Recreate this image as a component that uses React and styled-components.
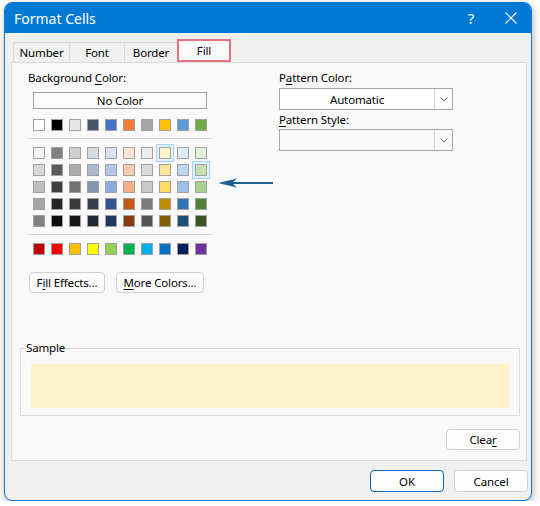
import React from 'react'
import styled, { createGlobalStyle } from 'styled-components'

const GlobalStyle = createGlobalStyle`
    body {
        margin: 0;
        background: #fff;
        font-family: "Noto Sans", "Segoe UI", sans-serif;
    }
`

const Window = styled.div`
    box-sizing: border-box;
    width: 528px;
    height: 499px;
    margin: 2px 0 0 4px;
    border: 1px solid #0a78d6;
    border-radius: 8px;
    overflow: hidden;
    background: #f0f0f0;
    box-shadow: 1px 3px 8px rgba(0, 0, 0, 0.3);
    display: flex;
    flex-direction: column;
    font-size: 11.5px;
    letter-spacing: -0.15px;
    color: #000;
`
const TitleBar = styled.div`
    height: 30px;
    background: #0078d4;
    color: #fff;
    display: flex;
    align-items: center;
    padding-left: 9px;
    letter-spacing: 0;
`
const Title = styled.span`
    flex: 1;
    font-size: 14px;
`
const TitleButton = styled.div`
    width: 40px;
    height: 30px;
    display: flex;
    align-items: center;
    justify-content: center;
    font-size: 15px;
`
const TabStrip = styled.div`
    display: flex;
    align-items: flex-end;
    height: 23px;
    margin: 6px 0 0 8px;
    position: relative;
    z-index: 1;
`
const Tab = styled.div`
    box-sizing: border-box;
    width: ${p => p.w}px;
    height: ${p => (p.active ? 23 : 20)}px;
    margin-left: ${p => (p.first ? 0 : -1)}px;
    border: ${p => (p.active ? '2px solid #e5707e' : '1px solid #d9d9d9')};
    border-bottom: ${p => (p.active ? '2px solid #e5707e' : 'none')};
    background: ${p => (p.active ? '#fafafa' : '#f0f0f0')};
    display: flex;
    align-items: center;
    justify-content: center;
`
const Panel = styled.div`
    box-sizing: border-box;
    position: relative;
    height: 399px;
    margin: 0 4px 0 6px;
    border: 1px solid #dadada;
    background: #f9f9f9;
    padding: 8px 6px 0 8px;
`
const TopSection = styled.div`
    display: grid;
    grid-template-columns: 251px 1fr;
    padding-left: 8px;
`
const Column = styled.div`
    display: flex;
    flex-direction: column;
    align-items: flex-start;
`
const Label = styled.div`
    line-height: 14px;
    height: 14px;
    margin-top: ${p => p.mt || 0}px;
`
const Key = styled.span`
    text-decoration: underline;
    text-underline-offset: 2px;
`
const NoColor = styled.div`
    box-sizing: border-box;
    width: 174px;
    height: 17px;
    margin: 7px 0 0 5px;
    border: 1px solid #a0a0a0;
    background: #fbfbfb;
    text-align: center;
    line-height: 15px;
`
const SwatchGrid = styled.div`
    display: grid;
    grid-template-columns: repeat(10, 12px);
    column-gap: 6px;
    row-gap: 5px;
    margin: ${p => p.mt}px 0 0 5px;
`
const Swatch = styled.div`
    box-sizing: border-box;
    width: 12px;
    height: 12px;
    border: 1px solid #a0a0a0;
    background: ${p => p.color};
    ${p => p.hot && `
        box-shadow: 0 0 0 2px #e4f2ff;
        outline: 1px solid #9fd3ff;
        outline-offset: 2px;
    `}
`
const Separator = styled.div`
    width: 184px;
    height: 1px;
    background: #cfcfcf;
    margin-top: 7px;
`
const ButtonRow = styled.div`
    display: flex;
    gap: 11px;
    margin: 17px 0 0 1px;
`
const PushButton = styled.div`
    box-sizing: border-box;
    width: ${p => p.w}px;
    height: ${p => p.h || 21}px;
    border: 1px solid ${p => (p.primary ? '#0067c0' : '#d0d0d0')};
    border-radius: 4px;
    background: #fdfdfd;
    display: flex;
    align-items: center;
    justify-content: center;
`
const Dropdown = styled.div`
    box-sizing: border-box;
    width: 174px;
    height: 22px;
    margin-top: ${p => p.mt}px;
    border: 1px solid #a6a6a6;
    background: ${p => (p.disabled ? '#f9f9f9' : '#fff')};
    display: flex;
`
const DropValue = styled.div`
    flex: 1;
    display: flex;
    align-items: center;
    justify-content: center;
`
const DropArrow = styled.div`
    width: 17px;
    border-left: 1px solid #d4d4d4;
    display: flex;
    align-items: center;
    justify-content: center;
`
const Group = styled.fieldset`
    box-sizing: border-box;
    width: 500px;
    margin: 48px 0 0 0;
    padding: 0 10px 7px;
    border: 1px solid #dcdcdc;
`
const Legend = styled.legend`
    padding: 0;
    margin-left: -5px;
    line-height: 14px;
`
const SampleFill = styled.div`
    height: 44px;
    margin-top: 9px;
    background: #fff2cc;
`
const ClearRow = styled.div`
    display: flex;
    justify-content: flex-end;
    width: 500px;
    margin-top: 13px;
`
const Pointer = styled.svg`
    position: absolute;
    left: 206px;
    top: 115px;
`
const Footer = styled.div`
    display: flex;
    justify-content: flex-end;
    gap: 10px;
    padding: 9px 3px 0 0;
`

const topRow = ['#ffffff', '#000000', '#e7e6e6', '#44546a', '#4472c4', '#ed7d31', '#a5a5a5', '#ffc000', '#5b9bd5', '#70ad47']
const shades = [
    '#f2f2f2', '#7f7f7f', '#d0cece', '#d6dce4', '#d9e1f2', '#fce4d6', '#ededed', '#fff2cc', '#ddebf7', '#e2efda',
    '#d9d9d9', '#595959', '#aeaaaa', '#acb9ca', '#b4c6e7', '#f8cbad', '#dbdbdb', '#ffe699', '#bdd7ee', '#c6e0b4',
    '#bfbfbf', '#404040', '#757171', '#8497b0', '#8ea9db', '#f4b084', '#c9c9c9', '#ffd966', '#9bc2e6', '#a9d08e',
    '#a6a6a6', '#262626', '#3a3838', '#333f4f', '#305496', '#c65911', '#7b7b7b', '#bf8f00', '#2f75b5', '#548235',
    '#808080', '#0d0d0d', '#161616', '#222b35', '#203764', '#833c0c', '#525252', '#806000', '#1f4e78', '#375623',
]
const standard = ['#c00000', '#ff0000', '#ffc000', '#ffff00', '#92d050', '#00b050', '#00b0f0', '#0070c0', '#002060', '#7030a0']
const hot = [7, 19]

const tabs = [
    { name: 'Number', w: 57 },
    { name: 'Font', w: 56 },
    { name: 'Border', w: 54 },
    { name: 'Fill', w: 54, active: true },
]

function Chevron() {
    return (
        <svg width="8" height="5" viewBox="0 0 8 5">
            <path d="M0.5 0.5 L4 4 L7.5 0.5" fill="none" stroke="#606060" strokeWidth="1" />
        </svg>
    )
}

export default function App() {
    return (
        <Window>
            <GlobalStyle />
            <TitleBar>
                <Title>Format Cells</Title>
                <TitleButton>?</TitleButton>
                <TitleButton>
                    <svg width="12" height="12" viewBox="0 0 12 12">
                        <path d="M0.5 0.5 L11.5 11.5 M11.5 0.5 L0.5 11.5" stroke="#fff" strokeWidth="1.1" />
                    </svg>
                </TitleButton>
            </TitleBar>

            <TabStrip>
                {tabs.map((t, i) => (
                    <Tab key={t.name} w={t.w} active={t.active} first={i === 0}>{t.name}</Tab>
                ))}
            </TabStrip>

            <Panel>
                <TopSection>
                    <Column>
                        <Label>Background <Key>C</Key>olor:</Label>
                        <NoColor>No Color</NoColor>
                        <SwatchGrid mt={10}>
                            {topRow.map(c => <Swatch key={c} color={c} />)}
                        </SwatchGrid>
                        <Separator />
                        <SwatchGrid mt={8}>
                            {shades.map((c, i) => <Swatch key={i} color={c} hot={hot.includes(i)} />)}
                        </SwatchGrid>
                        <Separator />
                        <SwatchGrid mt={8}>
                            {standard.map((c, i) => <Swatch key={i} color={c} />)}
                        </SwatchGrid>
                        <ButtonRow>
                            <PushButton w={76}>F<Key>i</Key>ll Effects...</PushButton>
                            <PushButton w={88}><Key>M</Key>ore Colors...</PushButton>
                        </ButtonRow>
                    </Column>
                    <Column>
                        <Label>P<Key>a</Key>ttern Color:</Label>
                        <Dropdown mt={3}>
                            <DropValue>Automatic</DropValue>
                            <DropArrow><Chevron /></DropArrow>
                        </Dropdown>
                        <Label mt={3}><Key>P</Key>attern Style:</Label>
                        <Dropdown mt={2} disabled>
                            <DropValue />
                            <DropArrow><Chevron /></DropArrow>
                        </Dropdown>
                    </Column>
                </TopSection>

                <Pointer width="56" height="10" viewBox="0 0 56 10">
                    <rect x="12" y="4" width="43" height="2" fill="#1b6495" />
                    <path d="M0 5 L19 0.5 L14 5 L19 9.5 Z" fill="#1b6495" />
                </Pointer>

                <Group>
                    <Legend>Sample</Legend>
                    <SampleFill />
                </Group>
                <ClearRow>
                    <PushButton w={74}>Clea<Key>r</Key></PushButton>
                </ClearRow>
            </Panel>

            <Footer>
                <PushButton w={74} h={22} primary>OK</PushButton>
                <PushButton w={74} h={22}>Cancel</PushButton>
            </Footer>
        </Window>
    )
}
